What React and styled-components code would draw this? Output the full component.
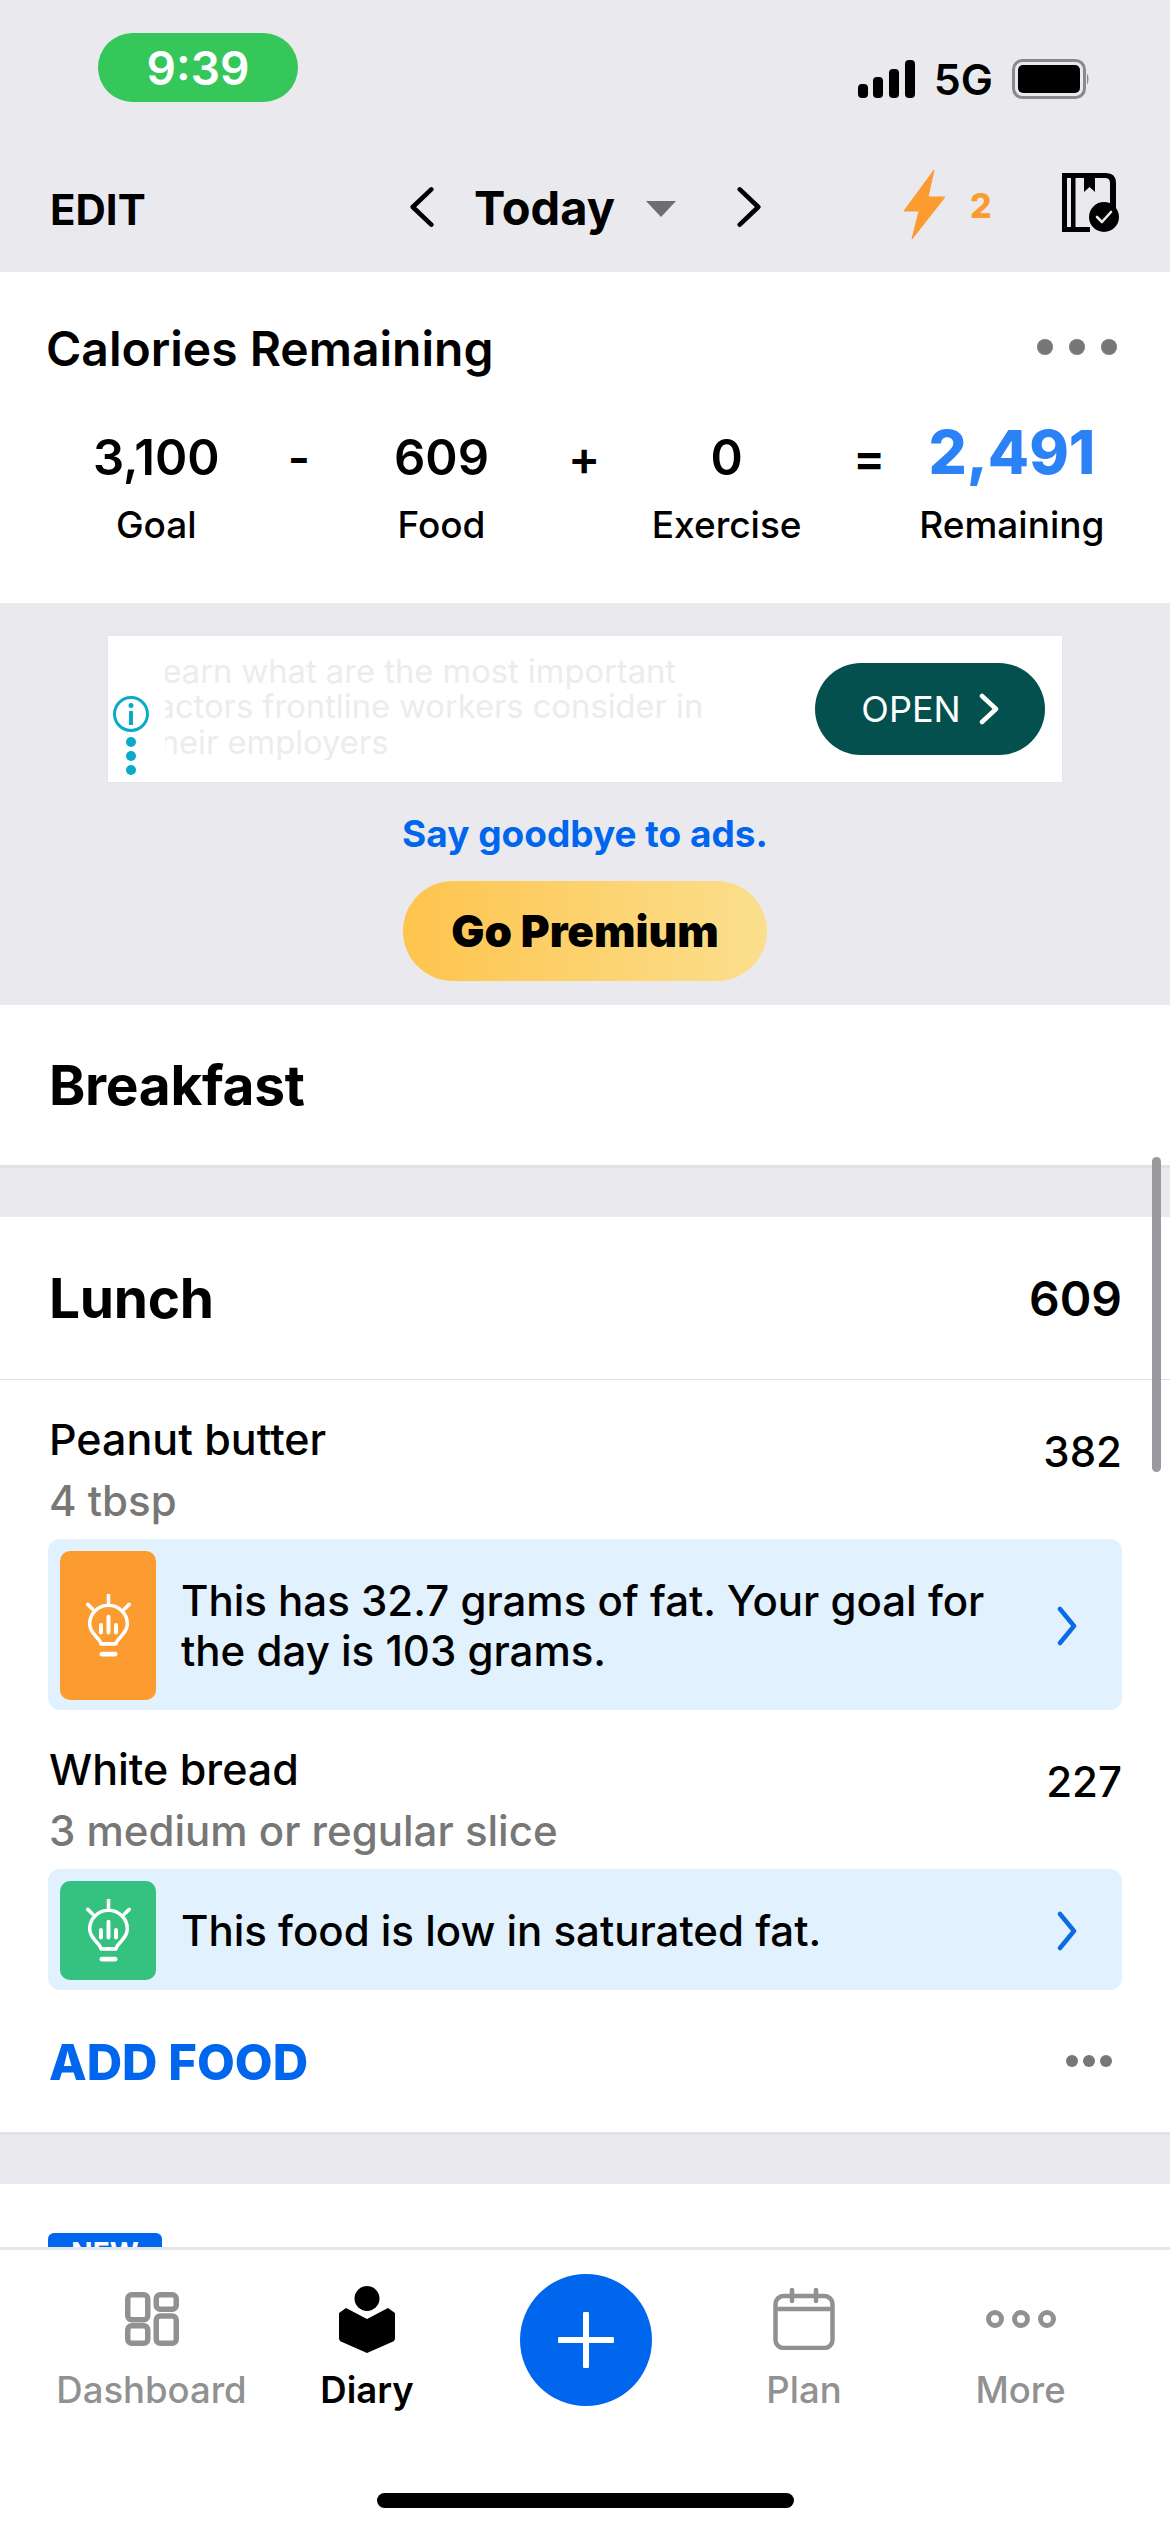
import React from 'react';
import styled, { createGlobalStyle } from 'styled-components';

const GlobalStyle = createGlobalStyle`
  html, body { margin: 0; padding: 0; background: #fff; }
  body { font-family: Inter, "Liberation Sans", sans-serif; color: #000; }
  * { box-sizing: border-box; }
`;

const Screen = styled.div`
  position: relative;
  width: 1170px;
  height: 2532px;
  display: flex;
  flex-direction: column;
  overflow: hidden;
  background: #eaeaee;
`;

const Scroller = styled.div`
  flex: 1;
  min-height: 0;
  overflow: hidden;
`;

const ScrollThumb = styled.div`
  position: absolute;
  left: 1152px;
  top: 1157px;
  width: 9px;
  height: 315px;
  border-radius: 5px;
  background: #9a9a9e;
`;

/* status bar */
const StatusBar = styled.div`
  height: 130px;
  padding: 33px 80px 0 98px;
  display: flex;
  justify-content: space-between;
  align-items: flex-start;
`;

const TimePill = styled.div`
  width: 200px;
  height: 69px;
  border-radius: 35px;
  background: #35c759;
  color: #fff;
  font-size: 46px;
  font-weight: 600;
  display: flex;
  align-items: center;
  justify-content: center;
`;

const StatusIcons = styled.div`
  display: flex;
  align-items: center;
  gap: 19px;
  margin-top: 26px;
`;

const NetworkLabel = styled.span`
  font-size: 43px;
  font-weight: 600;
  line-height: 40px;
`;

/* toolbar */
const Toolbar = styled.div`
  height: 142px;
  padding: 40px 50px 0 50px;
  display: flex;
  align-items: flex-start;
`;

const EditLabel = styled.div`
  width: 360px;
  font-size: 42px;
  font-weight: 700;
  line-height: 50px;
  margin-top: 15px;
`;

const DateNav = styled.div`
  width: 351px;
  height: 70px;
  margin-top: 2px;
  display: flex;
  align-items: center;
  justify-content: space-between;
`;

const DateLabel = styled.div`
  font-size: 47px;
  font-weight: 700;
  margin-left: 40px;
`;

const Caret = styled.div`
  width: 0;
  height: 0;
  margin-left: 31px;
  margin-right: 61px;
  margin-top: 4px;
  border-left: 15px solid transparent;
  border-right: 15px solid transparent;
  border-top: 16px solid #6e6e6e;
`;

const ToolIcons = styled.div`
  margin-left: 143px;
  flex: 1;
  display: flex;
  align-items: flex-start;
  justify-content: space-between;
`;

const Streak = styled.div`
  display: flex;
  align-items: center;
  gap: 25px;
  color: #fb9b30;
  font-size: 34px;
  font-weight: 800;
`;

const BookSlot = styled.div`
  display: flex;
  margin-top: 3px;
`;

/* summary card */
const Card = styled.section`
  background: #fff;
`;

const SummaryCard = styled(Card)`
  height: 331px;
  padding: 48px 53px 0 46px;
`;

const CardHead = styled.div`
  display: flex;
  justify-content: space-between;
  align-items: flex-start;
`;

const CardTitle = styled.div`
  font-size: 48px;
  font-weight: 600;
  line-height: 58px;
`;

const DotRow = styled.div`
  display: flex;
  gap: ${p => p.$gap}px;
  margin-top: ${p => p.$top}px;
`;

const Dot = styled.span`
  width: ${p => p.$size}px;
  height: ${p => p.$size}px;
  border-radius: 50%;
  background: ${p => p.$color || '#777'};
`;

const Equation = styled.div`
  margin: 48px -34px 0 -46px;
  display: grid;
  grid-template-columns: repeat(7, 142.6px);
  padding-left: 85px;
  justify-items: center;
`;

const Term = styled.div`
  display: flex;
  flex-direction: column;
  align-items: center;
  width: 200px;
  margin: 0 -29px;
`;

const TermValue = styled.div`
  height: 62px;
  display: flex;
  align-items: center;
  font-size: ${p => (p.$accent ? 60 : 49)}px;
  font-weight: ${p => (p.$accent ? 800 : 600)};
  color: ${p => (p.$accent ? '#2b82f6' : '#000')};
  margin-top: ${p => (p.$accent ? -5 : 0)}px;
  margin-bottom: ${p => (p.$accent ? 5 : 0)}px;
`;

const TermLabel = styled.div`
  margin-top: 15px;
  font-size: 37px;
  font-weight: 500;
  line-height: 44px;
  white-space: nowrap;
`;

const Operator = styled.div`
  height: 62px;
  display: flex;
  align-items: center;
  font-size: 48px;
  font-weight: 600;
`;

/* ad area */
const AdZone = styled.section`
  height: 402px;
  padding-top: 33px;
  display: flex;
  flex-direction: column;
  align-items: center;
`;

const AdBanner = styled.div`
  position: relative;
  width: 954px;
  height: 146px;
  background: #fff;
  box-shadow: 0 0 0 1px #e6e6e8;
  display: flex;
  align-items: center;
  justify-content: space-between;
  padding: 0 17px 0 57px;
`;

const AdCopy = styled.div`
  width: 560px;
  margin-top: -4px;
  overflow: hidden;
`;

const AdCopyLine = styled.div`
  margin-left: ${p => p.$shift}px;
  font-size: 32.7px;
  font-weight: 400;
  line-height: 35.5px;
  color: #ececee;
  white-space: nowrap;
`;

const AdMarks = styled.div`
  position: absolute;
  left: 4px;
  top: 59px;
  display: flex;
  flex-direction: column;
  align-items: center;
  gap: 4px;
  width: 38px;
`;

const OpenButton = styled.div`
  width: 230px;
  height: 92px;
  border-radius: 46px;
  background: #04504f;
  color: #fff;
  font-size: 36px;
  font-weight: 400;
  display: flex;
  align-items: center;
  justify-content: center;
  gap: 18px;
`;

const PromoLink = styled.div`
  margin-top: 27px;
  font-size: 37px;
  font-weight: 700;
  line-height: 50px;
  color: #0066ee;
`;

const PremiumButton = styled.div`
  margin-top: 22px;
  width: 364px;
  height: 100px;
  border-radius: 50px;
  background: linear-gradient(90deg, #fec44d, #fbdf8e);
  font-size: 44px;
  font-weight: 900;
  display: flex;
  align-items: center;
  justify-content: center;
`;

/* meals */
const MealCard = styled(Card)`
  border-bottom: 3px solid #e2e2e5;
  margin-bottom: ${p => p.$gap}px;
`;

const MealHead = styled.div`
  height: ${p => p.$height}px;
  padding: 0 48px 0 49px;
  display: flex;
  align-items: center;
  justify-content: space-between;
  border-bottom: ${p => (p.$ruled ? '1px solid #dedee0' : 'none')};
`;

const MealTitle = styled.div`
  font-size: 55px;
  font-weight: 700;
  letter-spacing: -0.3px;
`;

const MealTotal = styled.div`
  font-size: 48px;
  font-weight: 600;
`;

const FoodRow = styled.div`
  padding: 0 48px;
`;

const FoodTop = styled.div`
  padding: ${p => p.$top}px 0 0 1px;
  display: flex;
  justify-content: space-between;
`;

const FoodName = styled.div`
  font-size: 43px;
  font-weight: 500;
  line-height: 50px;
`;

const FoodServing = styled.div`
  font-size: 42px;
  font-weight: 500;
  line-height: 50px;
  margin-top: 12px;
  color: #777;
`;

const FoodCalories = styled.div`
  font-size: 42px;
  font-weight: 500;
  line-height: 50px;
  margin-top: 13px;
`;

const Tip = styled.div`
  margin-top: 13px;
  padding: 12px 20px 10px 12px;
  background: #e1f1fd;
  border-radius: 12px;
  display: flex;
  align-items: stretch;
`;

const TipBadge = styled.div`
  width: 96px;
  height: ${p => p.$height}px;
  flex: none;
  border-radius: 10px;
  background: ${p => p.$color};
  display: flex;
  align-items: center;
  justify-content: center;
`;

const TipText = styled.div`
  flex: 1;
  margin-left: 25px;
  align-self: center;
  font-size: 42px;
  font-weight: 500;
  line-height: 50px;
`;

const TipChevron = styled.div`
  flex: none;
  align-self: center;
  display: flex;
  margin-right: 25px;
`;

const AddRow = styled.div`
  height: 142px;
  padding: 0 58px 0 49px;
  display: flex;
  align-items: center;
  justify-content: space-between;
`;

const AddFood = styled.div`
  font-size: 49px;
  font-weight: 800;
  color: #0066ee;
  margin-top: 3px;
`;

const NextCard = styled(Card)`
  height: 70px;
  padding: 49px 0 0 48px;
  overflow: hidden;
`;

const NewTag = styled.div`
  width: 114px;
  height: 40px;
  border-radius: 6px 6px 0 0;
  background: #0066ee;
  color: #fff;
  font-size: 28px;
  font-weight: 700;
  line-height: 40px;
  text-align: center;
`;

/* tab bar */
const TabBar = styled.nav`
  flex: none;
  height: 285px;
  background: #fff;
  border-top: 3px solid #e6e6e9;
  position: relative;
  display: grid;
  grid-template-columns: 215px 216px 222px 214px 219px;
  padding-left: 44px;
  justify-items: center;
  align-items: start;
`;

const Tab = styled.div`
  padding-top: 24px;
  display: flex;
  flex-direction: column;
  align-items: center;
  color: ${p => (p.$active ? '#000' : '#919191')};
`;

const TabIcon = styled.div`
  height: 90px;
  display: flex;
  align-items: center;
  justify-content: center;
`;

const TabLabel = styled.div`
  font-size: 36.5px;
  font-weight: ${p => (p.$active ? 600 : 500)};
  line-height: 44px;
  margin-top: 4px;
`;

const AddButton = styled.div`
  width: 132px;
  height: 132px;
  margin-top: 24px;
  border-radius: 50%;
  background: #0066ee;
  display: flex;
  align-items: center;
  justify-content: center;
`;

const HomeBar = styled.div`
  position: absolute;
  left: 377px;
  top: 243px;
  width: 417px;
  height: 15px;
  border-radius: 8px;
  background: #000;
`;

/* drawings */
const Signal = () => (
  <svg width="57" height="38" viewBox="0 0 57 38">
    <rect x="0" y="24" width="10" height="14" rx="4" fill="#000" />
    <rect x="15" y="17" width="10" height="21" rx="4" fill="#000" />
    <rect x="31" y="9" width="10" height="29" rx="4" fill="#000" />
    <rect x="47" y="0" width="10" height="38" rx="4" fill="#000" />
  </svg>
);

const Battery = () => (
  <svg width="78" height="40" viewBox="0 0 78 40">
    <rect x="1.5" y="1.5" width="71" height="37" rx="9" fill="none" stroke="#8a8a8c" strokeWidth="3" />
    <rect x="6" y="6" width="62" height="28" rx="5" fill="#000" />
    <path d="M75 14 Q78 20 75 26 Z" fill="#8a8a8c" />
  </svg>
);

const Chevron = ({ dir = 'right', w = 26, h = 44, color = '#000', sw = 5 }) => (
  <svg width={w} height={h} viewBox={`0 0 ${w} ${h}`}>
    <path
      d={dir === 'right'
        ? `M3 3 L${w - 3} ${h / 2} L3 ${h - 3}`
        : `M${w - 3} 3 L3 ${h / 2} L${w - 3} ${h - 3}`}
      fill="none"
      stroke={color}
      strokeWidth={sw}
      strokeLinecap="round"
      strokeLinejoin="round"
    />
  </svg>
);

const Bolt = () => (
  <svg width="41" height="70" viewBox="0 0 41 70">
    <path d="M30 0 L0 41 L15 41 L8 69 L41 27 L24 27 Z" fill="#fb9b30" stroke="#fb9b30" strokeWidth="1" strokeLinejoin="round" />
  </svg>
);

const LogBook = () => (
  <svg width="58" height="60" viewBox="0 0 58 60">
    <path d="M0 0 H44 Q54 0 54 10 V40 H48 V10 Q48 5 43 5 H33 V19 L27.5 14 L22 19 V5 H13.5 V54 H28 V59 H0 Z M5 5 V54 H9 V5 Z" fill="#000" fillRule="evenodd" />
    <circle cx="42" cy="44" r="15" fill="#000" />
    <path d="M35 44 L40 49 L49 39" fill="none" stroke="#eaeaee" strokeWidth="2.6" strokeLinecap="round" strokeLinejoin="round" />
  </svg>
);

const Info = () => (
  <svg width="38" height="38" viewBox="0 0 38 38">
    <circle cx="19" cy="19" r="16.5" fill="none" stroke="#09abc9" strokeWidth="3" />
    <rect x="17" y="16" width="4" height="14" fill="#09abc9" />
    <circle cx="19" cy="10.5" r="2.5" fill="#09abc9" />
  </svg>
);

const Bulb = () => (
  <svg width="47" height="64" viewBox="0 0 50 68">
    <g fill="none" stroke="#fff" strokeWidth="3.8" strokeLinecap="round" strokeLinejoin="round">
      <path d="M25 1 V9 M3 11 L8 16 M47 11 L42 16" />
      <path d="M17 53 C16 46 5 43 5 32 A20 20 0 1 1 45 32 C45 43 34 46 33 53 Z" />
      <path d="M25 24 V41 M17 33 V41 M33 33 V41" strokeWidth="4.2" />
      <path d="M18 64 H32" strokeWidth="5" />
    </g>
  </svg>
);

const DashboardIcon = () => (
  <svg width="54" height="54" viewBox="0 0 54 54">
    <g fill="none" stroke="#919191" strokeWidth="5.5">
      <rect x="2.75" y="2.75" width="20" height="25" rx="4" />
      <rect x="31.25" y="2.75" width="20" height="14.5" rx="4" />
      <rect x="2.75" y="33.75" width="20" height="17.5" rx="4" />
      <rect x="31.25" y="24" width="20" height="27.25" rx="4" />
    </g>
  </svg>
);

const DiaryIcon = () => (
  <svg width="56" height="67" viewBox="0 0 56 67">
    <ellipse cx="28" cy="12.5" rx="12.5" ry="12.5" fill="#000" />
    <path d="M0 27 L7 22 L28 33 L49 22 L56 27 V52 Q56 55 53 56 L28 67 L3 56 Q0 55 0 52 Z" fill="#000" />
  </svg>
);

const PlanIcon = () => (
  <svg width="62" height="62" viewBox="0 0 62 62">
    <g fill="none" stroke="#919191" strokeWidth="4.5" strokeLinecap="round">
      <rect x="2.5" y="8" width="57" height="52" rx="8" />
      <path d="M3 21 H59" />
      <path d="M19 2 V13 M43 2 V13" />
    </g>
  </svg>
);

const MoreIcon = () => (
  <svg width="70" height="20" viewBox="0 0 70 20">
    <g fill="none" stroke="#919191" strokeWidth="5">
      <circle cx="9" cy="10" r="6.5" />
      <circle cx="35" cy="10" r="6.5" />
      <circle cx="61" cy="10" r="6.5" />
    </g>
  </svg>
);

const Plus = () => (
  <svg width="56" height="56" viewBox="0 0 56 56">
    <path d="M28 2 V54 M2 28 H54" stroke="#fff" strokeWidth="6" strokeLinecap="round" />
  </svg>
);

const Tips = ({ color, height, children }) => (
  <Tip>
    <TipBadge $color={color} $height={height}><Bulb /></TipBadge>
    <TipText>{children}</TipText>
    <TipChevron><Chevron w={20} h={40} color="#0a6be6" sw={4.5} /></TipChevron>
  </Tip>
);

const Food = ({ name, serving, calories, top, children }) => (
  <FoodRow>
    <FoodTop $top={top}>
      <div>
        <FoodName>{name}</FoodName>
        <FoodServing>{serving}</FoodServing>
      </div>
      <FoodCalories>{calories}</FoodCalories>
    </FoodTop>
    {children}
  </FoodRow>
);

const terms = [
  { value: '3,100', label: 'Goal', op: '-' },
  { value: '609', label: 'Food', op: '+' },
  { value: '0', label: 'Exercise', op: '=' },
  { value: '2,491', label: 'Remaining', accent: true },
];

export default function App() {
  return (
    <>
      <GlobalStyle />
      <Screen>
        <Scroller>
          <StatusBar>
            <TimePill>9:39</TimePill>
            <StatusIcons>
              <Signal />
              <NetworkLabel>5G</NetworkLabel>
              <Battery />
            </StatusIcons>
          </StatusBar>

          <Toolbar>
            <EditLabel>EDIT</EditLabel>
            <DateNav>
              <Chevron dir="left" />
              <DateLabel>Today</DateLabel>
              <Caret />
              <Chevron />
            </DateNav>
            <ToolIcons>
              <Streak><Bolt />2</Streak>
              <BookSlot><LogBook /></BookSlot>
            </ToolIcons>
          </Toolbar>

          <SummaryCard>
            <CardHead>
              <CardTitle>Calories Remaining</CardTitle>
              <DotRow $gap={16} $top={19}>
                <Dot $size={16} />
                <Dot $size={16} />
                <Dot $size={16} />
              </DotRow>
            </CardHead>
            <Equation>
              {terms.map(t => (
                <React.Fragment key={t.label}>
                  <Term>
                    <TermValue $accent={t.accent}>{t.value}</TermValue>
                    <TermLabel>{t.label}</TermLabel>
                  </Term>
                  {t.op && <Operator>{t.op}</Operator>}
                </React.Fragment>
              ))}
            </Equation>
          </SummaryCard>

          <AdZone>
            <AdBanner>
              <AdCopy>
                <AdCopyLine $shift={-21}>Learn what are the most important</AdCopyLine>
                <AdCopyLine $shift={-20}>factors frontline workers consider in</AdCopyLine>
                <AdCopyLine $shift={-16}>their employers</AdCopyLine>
              </AdCopy>
              <OpenButton>
                OPEN
                <Chevron w={20} h={32} color="#fff" sw={4.5} />
              </OpenButton>
              <AdMarks>
                <Info />
                <Dot $size={10} $color="#09abc9" />
                <Dot $size={10} $color="#09abc9" />
                <Dot $size={10} $color="#09abc9" />
              </AdMarks>
            </AdBanner>
            <PromoLink>Say goodbye to ads.</PromoLink>
            <PremiumButton>Go Premium</PremiumButton>
          </AdZone>

          <MealCard $gap={49}>
            <MealHead $height={160}>
              <MealTitle>Breakfast</MealTitle>
            </MealHead>
          </MealCard>

          <MealCard $gap={49}>
            <MealHead $height={163} $ruled>
              <MealTitle>Lunch</MealTitle>
              <MealTotal>609</MealTotal>
            </MealHead>
            <Food name="Peanut butter" serving="4 tbsp" calories="382" top={34}>
              <Tips color="#fb9b30" height={149}>
                This has 32.7 grams of fat. Your goal for<br />the day is 103 grams.
              </Tips>
            </Food>
            <Food name="White bread" serving="3 medium or regular slice" calories="227" top={34}>
              <Tips color="#35c17f" height={99}>This food is low in saturated fat.</Tips>
            </Food>
            <AddRow>
              <AddFood>ADD FOOD</AddFood>
              <DotRow $gap={5} $top={0}>
                <Dot $size={12} />
                <Dot $size={12} />
                <Dot $size={12} />
              </DotRow>
            </AddRow>
          </MealCard>

          <NextCard>
            <NewTag>NEW</NewTag>
          </NextCard>
        </Scroller>

        <TabBar>
          <Tab>
            <TabIcon><DashboardIcon /></TabIcon>
            <TabLabel>Dashboard</TabLabel>
          </Tab>
          <Tab $active>
            <TabIcon><DiaryIcon /></TabIcon>
            <TabLabel $active>Diary</TabLabel>
          </Tab>
          <AddButton><Plus /></AddButton>
          <Tab>
            <TabIcon><PlanIcon /></TabIcon>
            <TabLabel>Plan</TabLabel>
          </Tab>
          <Tab>
            <TabIcon><MoreIcon /></TabIcon>
            <TabLabel>More</TabLabel>
          </Tab>
          <HomeBar />
        </TabBar>

        <ScrollThumb />
      </Screen>
    </>
  );
}
